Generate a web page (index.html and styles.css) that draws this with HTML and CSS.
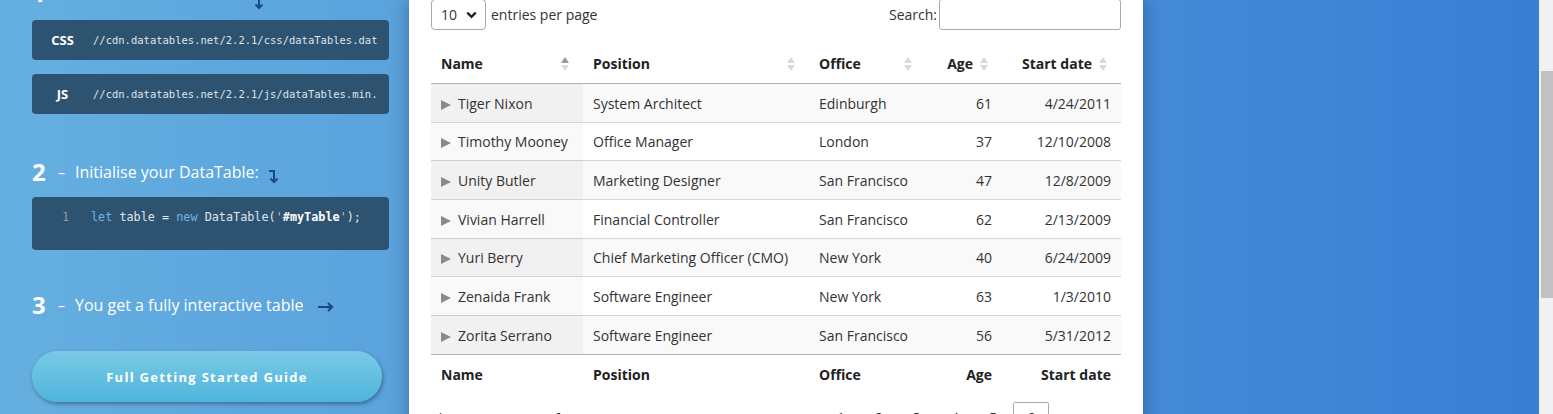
FILE: index.html
```html
<!DOCTYPE html>
<html lang="en">
<head>
<meta charset="utf-8">
<title>DataTables</title>
<link rel="stylesheet" href="styles.css">
</head>
<body>
<div class="page">
  <section class="intro">
    <h3 class="step step-1"><span class="num">1</span><span class="dash">–</span><span class="label">Include these two files:</span>
      <svg class="arrow arrow-down" width="10" height="14" viewBox="0 0 10 14"><path d="M5 1 V12 M1.5 8.5 L5 12 L8.5 8.5" fill="none" stroke="#1b4a82" stroke-width="2"/></svg>
    </h3>
    <div class="file"><span class="file-type">CSS</span><code class="file-url">//cdn.datatables.net/2.2.1/css/dataTables.dataTables.min.css</code></div>
    <div class="file"><span class="file-type">JS</span><code class="file-url">//cdn.datatables.net/2.2.1/js/dataTables.min.js</code></div>

    <h3 class="step step-2"><span class="num">2</span><span class="dash">–</span><span class="label">Initialise your DataTable:</span>
      <svg class="arrow arrow-turn" width="11" height="15" viewBox="0 0 11 15"><path d="M1 2 H6 V13 M2.5 9.5 L6 13 L9.5 9.5" fill="none" stroke="#1b4a82" stroke-width="2"/></svg>
    </h3>
    <div class="code"><span class="ln">1</span><code><span class="kw">let</span> table = <span class="kw">new</span> DataTable(<span class="q">'</span><b class="str">#myTable</b><span class="q">'</span>);</code></div>

    <h3 class="step step-3"><span class="num">3</span><span class="dash">–</span><span class="label">You get a fully interactive table</span>
      <svg class="arrow arrow-right" width="17" height="10" viewBox="0 0 17 10"><path d="M1 5 H15 M11 1 L15 5 L11 9" fill="none" stroke="#1b4a82" stroke-width="2.2"/></svg>
    </h3>
    <a class="guide" href="#">Full Getting Started Guide</a>
  </section>

  <section class="card">
    <div class="controls">
      <div class="length">
        <div class="select"><span>10</span><svg width="11" height="8" viewBox="0 0 11 8"><path d="M1.3 1.6 L5.5 5.8 L9.7 1.6" fill="none" stroke="#222" stroke-width="2.3"/></svg></div>
        <span>entries per page</span>
      </div>
      <label class="search">Search:<span class="input"></span></label>
    </div>

    <table class="dt">
      <colgroup>
        <col class="c-name"><col class="c-pos"><col class="c-office"><col class="c-age"><col class="c-date">
      </colgroup>
      <thead>
        <tr>
          <th><div class="th"><span class="t">Name</span><span class="order asc"></span></div></th>
          <th><div class="th"><span class="t">Position</span><span class="order"></span></div></th>
          <th><div class="th"><span class="t">Office</span><span class="order"></span></div></th>
          <th class="num-col"><div class="th"><span class="t">Age</span><span class="order"></span></div></th>
          <th class="num-col"><div class="th"><span class="t">Start date</span><span class="order"></span></div></th>
        </tr>
      </thead>
      <tbody>
        <tr class="odd"><td class="name"><span class="ctl"></span>Tiger Nixon</td><td>System Architect</td><td>Edinburgh</td><td class="r">61</td><td class="r">4/24/2011</td></tr>
        <tr class="even"><td class="name"><span class="ctl"></span>Timothy Mooney</td><td>Office Manager</td><td>London</td><td class="r">37</td><td class="r">12/10/2008</td></tr>
        <tr class="odd"><td class="name"><span class="ctl"></span>Unity Butler</td><td>Marketing Designer</td><td>San Francisco</td><td class="r">47</td><td class="r">12/8/2009</td></tr>
        <tr class="even"><td class="name"><span class="ctl"></span>Vivian Harrell</td><td>Financial Controller</td><td>San Francisco</td><td class="r">62</td><td class="r">2/13/2009</td></tr>
        <tr class="odd"><td class="name"><span class="ctl"></span>Yuri Berry</td><td>Chief Marketing Officer (CMO)</td><td>New York</td><td class="r">40</td><td class="r">6/24/2009</td></tr>
        <tr class="even"><td class="name"><span class="ctl"></span>Zenaida Frank</td><td>Software Engineer</td><td>New York</td><td class="r">63</td><td class="r">1/3/2010</td></tr>
        <tr class="odd"><td class="name"><span class="ctl"></span>Zorita Serrano</td><td>Software Engineer</td><td>San Francisco</td><td class="r">56</td><td class="r">5/31/2012</td></tr>
      </tbody>
      <tfoot>
        <tr><th>Name</th><th>Position</th><th>Office</th><th class="r">Age</th><th class="r">Start date</th></tr>
      </tfoot>
    </table>

    <div class="bottom">
      <div class="info">Showing 51 to 57 of 57 entries</div>
      <nav class="paging">
        <span class="pg">1</span><span class="pg">2</span><span class="pg">3</span><span class="pg">4</span><span class="pg">5</span><span class="pg current">6</span><span class="pg disabled">›</span><span class="pg disabled">»</span>
      </nav>
    </div>
  </section>

  <div class="rest"></div>
</div>
<div class="scrollbar"><div class="thumb"></div></div>
</body>
</html>
```

FILE: styles.css
```css
* { box-sizing: border-box; }
html, body { margin: 0; padding: 0; }
body {
  display: flex;
  height: 414px;
  overflow: hidden;
  font-family: "Open Sans", "Noto Sans", sans-serif;
  color: #333;
}
.page {
  flex: 1;
  display: flex;
  align-items: flex-start;
  background: linear-gradient(to right, #65afe0, #3a7ed4);
  overflow: hidden;
}

/* ---------- intro column ---------- */
.intro {
  width: 409px;
  flex: none;
  padding-left: 32px;
  padding-right: 20px;
  margin-top: -22px;
  color: #fff;
}
.step {
  display: flex;
  align-items: center;
  height: 30px;
  margin: 0;
  font-weight: 400;
  white-space: nowrap;
}
.step .num { font-size: 24px; font-weight: 700; width: 13px; line-height: 30px; }
.step .dash { font-size: 14px; margin-left: 13px; margin-right: 10px; }
.step .label { font-size: 16px; }
.step .arrow { margin-left: 9px; }
.step-1 { margin-bottom: 12px; }
.step-1 .label { margin-bottom: 6px; }
.step-1 .arrow { margin-top: 20px; }
.step-2 { margin-top: 43px; margin-bottom: 10px; }
.step-2 .arrow { margin-top: 8px; }
.step-3 { margin-top: 40px; margin-bottom: 31px; }
.step-3 .arrow { margin-top: 4px; margin-left: 14px; }

.file {
  display: flex;
  align-items: center;
  height: 40px;
  background: #2e5370;
  border-radius: 4px;
  margin-bottom: 14px;
  padding-right: 11px;
  overflow: hidden;
}
.file-type {
  width: 61px;
  flex: none;
  text-align: center;
  font-weight: 700;
  font-size: 13px;
}
.file-url {
  font-family: "DejaVu Sans Mono", "Liberation Mono", monospace;
  font-size: 10.5px;
  color: #dfe5ea;
  white-space: nowrap;
  overflow: hidden;
}
.code {
  display: flex;
  height: 53px;
  background: #2e5370;
  border-radius: 4px;
  padding-top: 12px;
  font-family: "DejaVu Sans Mono", "Liberation Mono", monospace;
  font-size: 11.8px;
  line-height: 16px;
  color: #dfe5ea;
}
.code .ln { width: 59px; text-align: right; padding-right: 22px; color: #8e9ba6; flex: none; }
.code code { font-family: inherit; white-space: pre; }
.code .kw { color: #6cb4ea; }
.code .q { color: #b9c3cb; }
.code .str { color: #fff; }

.guide {
  display: flex;
  align-items: center;
  justify-content: center;
  width: 350px;
  height: 51px;
  border-radius: 26px;
  background: linear-gradient(to bottom, #79cae5, #4fb4dc);
  box-shadow: 1px 2px 4px rgba(0, 0, 0, 0.35);
  color: #fff;
  font-weight: 700;
  font-size: 13px;
  letter-spacing: 1.3px;
  text-decoration: none;
}

/* ---------- card ---------- */
.card {
  width: 734px;
  flex: none;
  background: #fff;
  padding: 0 22px;
  margin-top: -1px;
  min-height: 460px;
  box-shadow: 0 0 18px rgba(0, 0, 0, 0.3);
  font-size: 14px;
}
.controls {
  display: flex;
  justify-content: space-between;
  align-items: center;
  height: 31px;
  margin-bottom: 14px;
}
.length { display: flex; align-items: center; gap: 5px; }
.select {
  display: flex;
  align-items: center;
  justify-content: space-between;
  width: 55px;
  height: 31px;
  border: 1px solid #aaa;
  border-radius: 4px;
  padding: 0 8px 0 9px;
}
.search { display: flex; align-items: center; gap: 2px; }
.input {
  width: 182px;
  height: 31px;
  border: 1px solid #aaa;
  border-radius: 3px;
  background: #fff;
}

.dt {
  width: 690px;
  table-layout: fixed;
  border-collapse: separate;
  border-spacing: 0;
}
.c-name { width: 152px; }
.c-pos { width: 226px; }
.c-office { width: 117px; }
.c-age { width: 76px; }
.c-date { width: 119px; }

.dt thead th {
  padding: 10px 13px 10px 10px;
  line-height: 19px;
  font-weight: 700;
  text-align: left;
  border-bottom: 1px solid rgba(0, 0, 0, 0.3);
  color: #222;
}
.th { display: flex; align-items: center; gap: 6px; }
.th .t { flex: 1; }
.num-col .t { text-align: right; }
.order {
  flex: none;
  width: 10px;
  display: flex;
  flex-direction: column;
  align-items: center;
  gap: 2px;
}
.order::before, .order::after {
  content: "";
  width: 0;
  height: 0;
  border-left: 4.5px solid transparent;
  border-right: 4.5px solid transparent;
}
.order::before { border-bottom: 6px solid #dadada; }
.order::after { border-top: 6px solid #dadada; }
.order.asc::before { border-bottom-color: #999; }

.dt tbody td {
  padding: 8.5px 10px 7.5px;
  line-height: 21.67px;
  border-top: 1px solid rgba(0, 0, 0, 0.15);
  white-space: nowrap;
}
.dt tbody tr:first-child td { border-top: none; }
.dt tbody tr.odd td { background: #f9f9f9; }
.dt tbody tr.odd td.name { background: #f1f1f1; }
.dt tbody tr.even td.name { background: #f9f9f9; }
.dt .r { text-align: right; }
.ctl {
  display: inline-block;
  width: 0;
  height: 0;
  border-left: 10px solid #8a8a8a;
  border-top: 5.5px solid transparent;
  border-bottom: 5.5px solid transparent;
  margin-right: 7px;
  vertical-align: -1px;
}
.dt tfoot th {
  padding: 10px 10px 6px;
  line-height: 19px;
  font-weight: 700;
  text-align: left;
  border-top: 1px solid rgba(0, 0, 0, 0.3);
  color: #222;
}
.dt tfoot th.r { text-align: right; }

.bottom {
  display: flex;
  justify-content: space-between;
  align-items: flex-start;
  margin-top: 12px;
}
.info { line-height: 23px; padding-top: 5px; }
.paging { display: flex; gap: 2px; }
.pg {
  width: 36px;
  height: 34px;
  line-height: 30px;
  text-align: center;
  border: 1px solid transparent;
  border-radius: 2px;
}
.pg.current { border-color: #aaa; }
.pg.disabled { color: #ccc; width: 34px; }

.rest { flex: 1; }

/* ---------- scrollbar ---------- */
.scrollbar {
  width: 14px;
  flex: none;
  background: #f1f1f1;
  padding: 71px 0 0 2px;
}
.thumb { height: 227px; background: #c1c1c1; }
```
